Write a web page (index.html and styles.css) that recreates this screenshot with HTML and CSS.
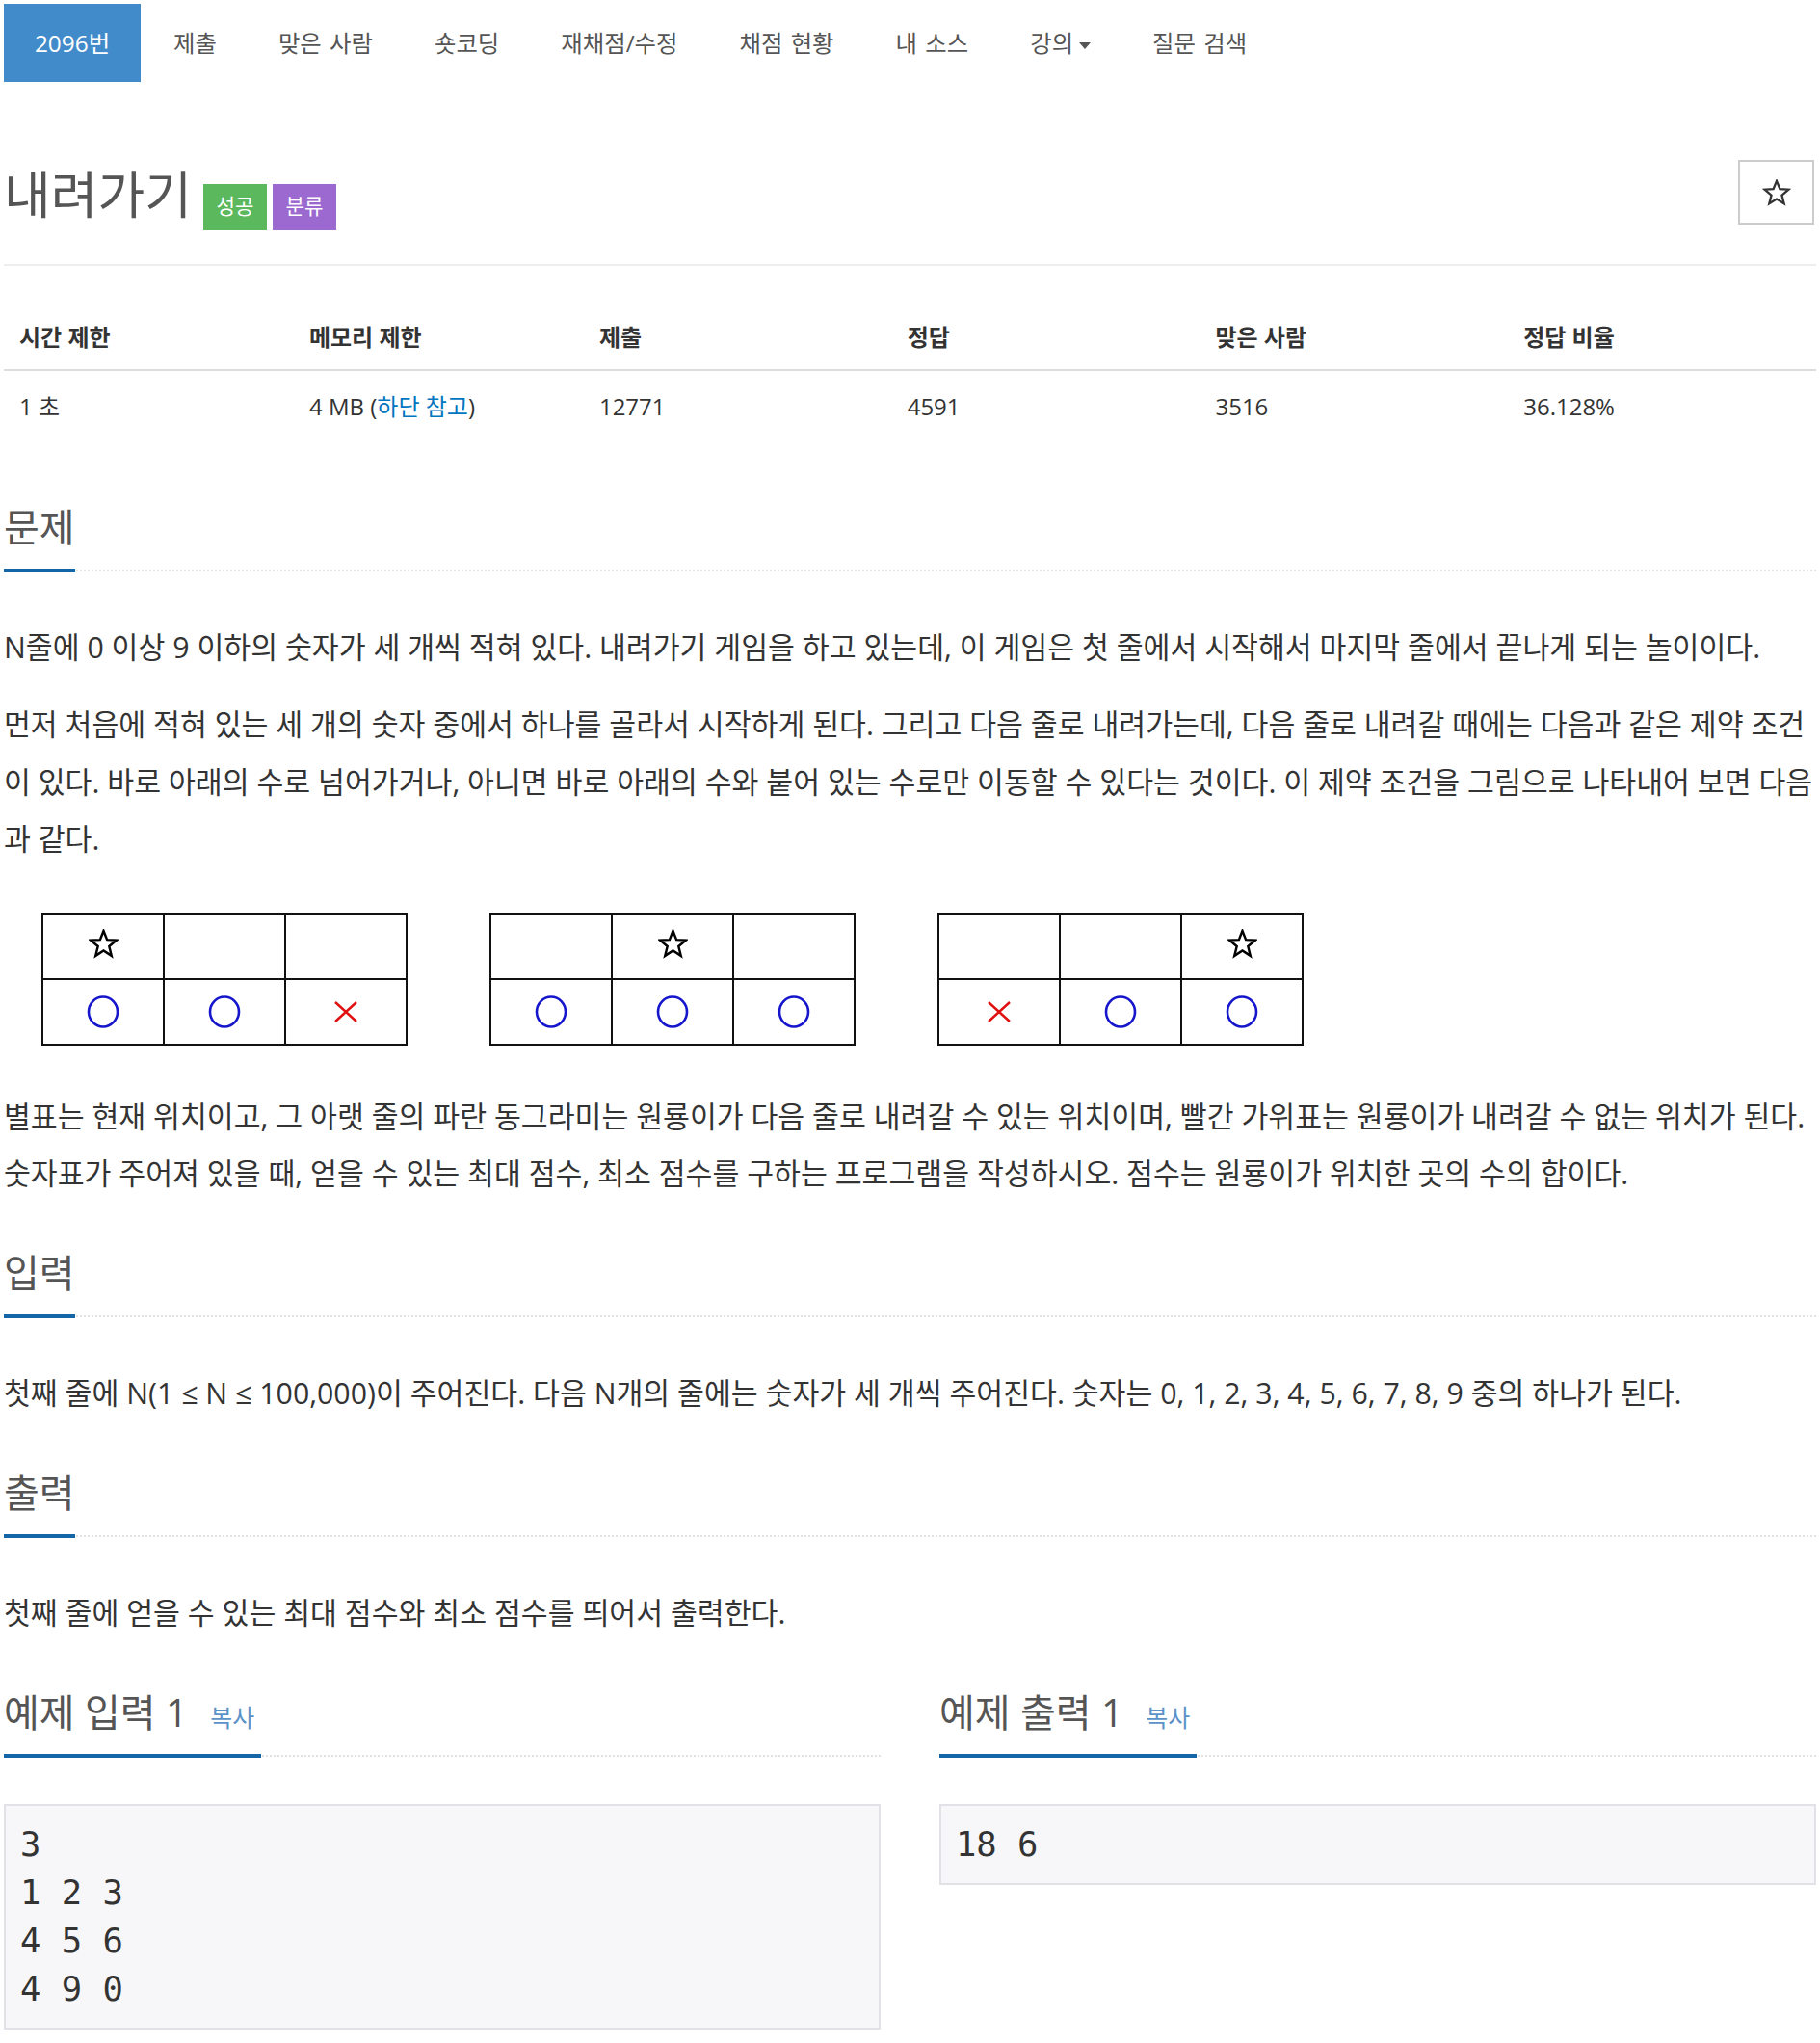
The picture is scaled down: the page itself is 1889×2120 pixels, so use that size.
FILE: index.html
```html
<!DOCTYPE html>
<html lang="ko">
<head>
<meta charset="utf-8">
<title>내려가기</title>
<link rel="stylesheet" href="styles.css">
</head>
<body>
<div class="page">
  <ul class="nav">
    <li class="active"><a class="problem-id">2096번</a></li>
    <li><a>제출</a></li>
    <li><a>맞은 사람</a></li>
    <li><a>숏코딩</a></li>
    <li><a>재채점/수정</a></li>
    <li><a>채점 현황</a></li>
    <li><a>내 소스</a></li>
    <li><a>강의<span class="caret"></span></a></li>
    <li><a>질문 검색</a></li>
  </ul>

  <div class="problem-header">
    <h1 class="title">내려가기<span class="label label-success">성공</span><span class="label label-purple">분류</span></h1>
    <button class="star-btn" type="button" aria-label="즐겨찾기">
      <svg width="30" height="28" viewBox="0 0 24 23"><polygon points="12,1.5 14.8,8.3 22.2,8.8 16.5,13.6 18.3,20.8 12,16.9 5.7,20.8 7.5,13.6 1.8,8.8 9.2,8.3" fill="none" stroke="#333" stroke-width="1.9" stroke-linejoin="miter"/></svg>
    </button>
  </div>

  <table class="info">
    <colgroup>
      <col class="c16"><col class="c16"><col class="c17"><col class="c17"><col class="c17"><col class="c17">
    </colgroup>
    <thead>
      <tr><th>시간 제한</th><th>메모리 제한</th><th>제출</th><th>정답</th><th>맞은 사람</th><th>정답 비율</th></tr>
    </thead>
    <tbody>
      <tr><td>1 초</td><td>4 MB (<a class="link">하단 참고</a>)</td><td>12771</td><td>4591</td><td>3516</td><td>36.128%</td></tr>
    </tbody>
  </table>

  <section class="section">
    <div class="headline"><h2>문제</h2></div>
    <p>N줄에 0 이상 9 이하의 숫자가 세 개씩 적혀 있다. 내려가기 게임을 하고 있는데, 이 게임은 첫 줄에서 시작해서 마지막 줄에서 끝나게 되는 놀이이다.</p>
    <p>먼저 처음에 적혀 있는 세 개의 숫자 중에서 하나를 골라서 시작하게 된다. 그리고 다음 줄로 내려가는데, 다음 줄로 내려갈 때에는 다음과 같은 제약 조건이 있다. 바로 아래의 수로 넘어가거나, 아니면 바로 아래의 수와 붙어 있는 수로만 이동할 수 있다는 것이다. 이 제약 조건을 그림으로 나타내어 보면 다음과 같다.</p>
    <div class="figure">
      <table class="grid3">
        <tr>
          <td><svg class="star" width="31" height="31" viewBox="0 0 24 24"><polygon points="12,1.5 14.8,8.6 22.3,9 16.5,13.9 18.4,21.6 12,17.4 5.6,21.6 7.5,13.9 1.7,9 9.2,8.6" fill="none" stroke="#000" stroke-width="1.9"/></svg></td>
          <td></td>
          <td></td>
        </tr>
        <tr>
          <td><svg width="34" height="34" viewBox="0 0 34 34"><ellipse cx="17" cy="17" rx="15" ry="15.5" fill="none" stroke="#1616cc" stroke-width="2.6"/></svg></td>
          <td><svg width="34" height="34" viewBox="0 0 34 34"><ellipse cx="17" cy="17" rx="15" ry="15.5" fill="none" stroke="#1616cc" stroke-width="2.6"/></svg></td>
          <td><svg width="26" height="22" viewBox="0 0 26 22"><path d="M2 1 L24 21 M24 1 L2 21" stroke="#e01010" stroke-width="2.4" fill="none"/></svg></td>
        </tr>
      </table>
      <table class="grid3">
        <tr>
          <td></td>
          <td><svg class="star" width="31" height="31" viewBox="0 0 24 24"><polygon points="12,1.5 14.8,8.6 22.3,9 16.5,13.9 18.4,21.6 12,17.4 5.6,21.6 7.5,13.9 1.7,9 9.2,8.6" fill="none" stroke="#000" stroke-width="1.9"/></svg></td>
          <td></td>
        </tr>
        <tr>
          <td><svg width="34" height="34" viewBox="0 0 34 34"><ellipse cx="17" cy="17" rx="15" ry="15.5" fill="none" stroke="#1616cc" stroke-width="2.6"/></svg></td>
          <td><svg width="34" height="34" viewBox="0 0 34 34"><ellipse cx="17" cy="17" rx="15" ry="15.5" fill="none" stroke="#1616cc" stroke-width="2.6"/></svg></td>
          <td><svg width="34" height="34" viewBox="0 0 34 34"><ellipse cx="17" cy="17" rx="15" ry="15.5" fill="none" stroke="#1616cc" stroke-width="2.6"/></svg></td>
        </tr>
      </table>
      <table class="grid3">
        <tr>
          <td></td>
          <td></td>
          <td><svg class="star" width="31" height="31" viewBox="0 0 24 24"><polygon points="12,1.5 14.8,8.6 22.3,9 16.5,13.9 18.4,21.6 12,17.4 5.6,21.6 7.5,13.9 1.7,9 9.2,8.6" fill="none" stroke="#000" stroke-width="1.9"/></svg></td>
        </tr>
        <tr>
          <td><svg width="26" height="22" viewBox="0 0 26 22"><path d="M2 1 L24 21 M24 1 L2 21" stroke="#e01010" stroke-width="2.4" fill="none"/></svg></td>
          <td><svg width="34" height="34" viewBox="0 0 34 34"><ellipse cx="17" cy="17" rx="15" ry="15.5" fill="none" stroke="#1616cc" stroke-width="2.6"/></svg></td>
          <td><svg width="34" height="34" viewBox="0 0 34 34"><ellipse cx="17" cy="17" rx="15" ry="15.5" fill="none" stroke="#1616cc" stroke-width="2.6"/></svg></td>
        </tr>
      </table>
    </div>
    <p>별표는 현재 위치이고, 그 아랫 줄의 파란 동그라미는 원룡이가 다음 줄로 내려갈 수 있는 위치이며, 빨간 가위표는 원룡이가 내려갈 수 없는 위치가 된다. 숫자표가 주어져 있을 때, 얻을 수 있는 최대 점수, 최소 점수를 구하는 프로그램을 작성하시오. 점수는 원룡이가 위치한 곳의 수의 합이다.</p>
  </section>

  <section class="section">
    <div class="headline"><h2>입력</h2></div>
    <p>첫째 줄에 N(1 ≤ N ≤ 100,000)이 주어진다. 다음 N개의 줄에는 숫자가 세 개씩 주어진다. 숫자는 0, 1, 2, 3, 4, 5, 6, 7, 8, 9 중의 하나가 된다.</p>
  </section>

  <section class="section">
    <div class="headline"><h2>출력</h2></div>
    <p>첫째 줄에 얻을 수 있는 최대 점수와 최소 점수를 띄어서 출력한다.</p>
  </section>

  <div class="samples">
    <section class="sample">
      <div class="headline"><h2>예제 입력 1 <a class="copy">복사</a></h2></div>
      <pre class="sample-data">3
1 2 3
4 5 6
4 9 0</pre>
    </section>
    <section class="sample">
      <div class="headline"><h2>예제 출력 1 <a class="copy">복사</a></h2></div>
      <pre class="sample-data">18 6</pre>
    </section>
  </div>
</div>
</body>
</html>
```

FILE: styles.css
```css
* { box-sizing: border-box; }

html, body {
  margin: 0;
  padding: 0;
  background: #fff;
}

body {
  font-family: "Open Sans", "Noto Sans CJK KR", sans-serif;
  font-size: 24px;
  color: #333;
}

.page {
  padding: 4px 4px 0;
}

/* navigation pills */
.nav {
  list-style: none;
  margin: 0;
  padding: 0;
  display: flex;
}

.nav li {
  margin-right: 4px;
}

.nav a {
  display: block;
  padding: 0 30px;
  line-height: 81px;
  font-size: 24.4px;
  word-spacing: 2px;
  color: #555;
  text-decoration: none;
}

.nav .active a {
  background: #428bca;
  color: #fff;
}

.nav .problem-id {
  min-width: 142px;
  text-align: center;
}

.caret {
  display: inline-block;
  width: 0;
  height: 0;
  border-top: 7px solid #555;
  border-left: 6px solid transparent;
  border-right: 6px solid transparent;
  margin-left: 6px;
  vertical-align: middle;
}

/* title */
.problem-header {
  display: flex;
  justify-content: space-between;
  align-items: flex-start;
  margin-top: 81px;
  padding-bottom: 35px;
  border-bottom: 2px solid #eee;
}

.title {
  margin: 0;
  padding-top: 2px;
  font-size: 53px;
  line-height: 67px;
  font-weight: 400;
  color: #555;
}

.label {
  display: inline-block;
  font-size: 21.2px;
  line-height: 1;
  padding: 12px 13.5px 15px;
  color: #fff;
  vertical-align: baseline;
  margin-left: 6px;
}

.label-success {
  background: #5cb85c;
  margin-left: 12px;
}

.label-purple {
  background: #9b69cf;
}

.star-btn {
  width: 79px;
  height: 67px;
  margin-right: 2px;
  border: 2px solid #ccc;
  background: #fff;
  padding: 0;
  display: flex;
  align-items: center;
  justify-content: center;
}

/* info table */
.info {
  width: 100%;
  border-collapse: collapse;
  table-layout: fixed;
  margin: 41px 0 64px;
}

.c16 { width: 16%; }
.c17 { width: 17%; }

.info th,
.info td {
  text-align: left;
  padding: 0 16px;
  line-height: 32px;
  font-size: 24px;
  color: #333;
}

.info th {
  padding-top: 17px;
  padding-bottom: 17px;
  border-bottom: 2px solid #ddd;
  font-weight: 700;
}

.info td {
  padding-top: 21px;
  padding-bottom: 23px;
}

.link {
  color: #0076c0;
  text-decoration: none;
}

/* sections */
.section {
  display: flow-root;
  margin-top: 31px;
}

.headline {
  display: flex;
  border-bottom: 2px dotted #e2e2e2;
  margin-bottom: 49px;
}

.headline h2 {
  margin: 0 0 -3px;
  font-size: 40px;
  line-height: 44px;
  font-weight: 400;
  color: #555;
  padding-bottom: 21px;
  border-bottom: 4px solid #1466a6;
}

.section p {
  margin: 0 0 20.5px;
  font-size: 30.3px;
  line-height: 59.5px;
  color: #333;
}

/* figure */
.figure {
  display: flex;
  gap: 85px;
  padding: 26px 0 23px 39px;
  margin: 0 0 20.5px;
}

.grid3 {
  border-collapse: collapse;
  table-layout: fixed;
  width: 380px;
}

.grid3 td {
  border: 2px solid #111;
  height: 68px;
  padding: 0;
  text-align: center;
  vertical-align: middle;
}

.grid3 svg {
  display: block;
  margin: 0 auto;
}

.grid3 .star {
  margin-top: -6px;
}

/* samples */
.samples {
  display: grid;
  grid-template-columns: 1fr 1fr;
  column-gap: 61px;
  margin-top: 31px;
}

.copy {
  font-size: 25px;
  line-height: 1;
  color: #5b92c8;
  margin-left: 13px;
  margin-right: 7px;
  text-decoration: none;
}

.sample-data {
  margin: 0;
  font-family: "DejaVu Sans Mono", monospace;
  font-size: 35.5px;
  line-height: 50px;
  padding: 15px;
  background: #f7f7f9;
  border: 2px solid #e1e1e8;
  color: #333;
  white-space: pre;
}
```
